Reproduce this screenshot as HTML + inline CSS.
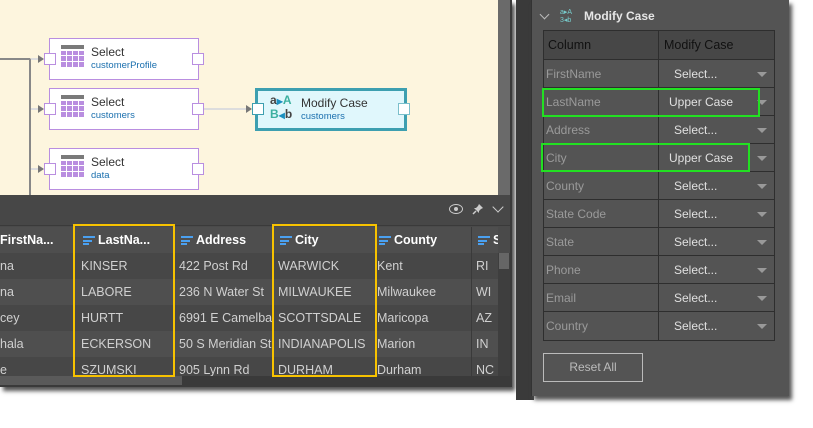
<!DOCTYPE html>
<html><head><style>
*{margin:0;padding:0;box-sizing:border-box}
body{width:813px;height:428px;background:#fff;position:relative;overflow:hidden;font-family:"Segoe UI","Liberation Sans",sans-serif}
.a{position:absolute}
.node{position:absolute;background:#fff;border:1px solid #b98ee0;width:150px;height:42px}
.port{position:absolute;width:12px;height:12px;background:#fff;border:1px solid #b98ee0;top:14px}
.grid{position:absolute;left:11px;top:6px;width:23px;height:23px;
background:linear-gradient(#7a7a7a 0 0) 0 0/23px 4px no-repeat,
repeating-linear-gradient(90deg,#b98ee0 0 5px,transparent 5px 6px) 0 6px/23px 17px no-repeat}
.grid::after{content:"";position:absolute;left:0;top:0;width:23px;height:23px;background:repeating-linear-gradient(180deg,transparent 0 5px,#fff 5px 6px) 0 5px/23px 18px no-repeat}
.nt{position:absolute;left:41px;top:7px;font-size:12px;color:#333;line-height:13px}
.ns{position:absolute;left:41px;top:21px;font-size:9.5px;color:#1a6fae}
.row{position:absolute;left:0;width:498px;height:26px;font-size:12.5px;color:#d0d0d0;line-height:26px;overflow:hidden}
.row span{position:absolute;white-space:nowrap}
.hd{font-weight:bold;color:#fff;font-size:12.5px}
.ic{display:inline-block;width:12px;height:9px;margin-right:3px;vertical-align:-1px;background:linear-gradient(#4aa0f0 0 0) 0 0/12px 2px no-repeat,linear-gradient(#4aa0f0 0 0) 0 3.5px/9px 2px no-repeat,linear-gradient(#4aa0f0 0 0) 0 7px/6px 2px no-repeat}
.tr{position:absolute;left:543px;width:232px;height:28px;border-bottom:1px solid #2e2e2e;font-size:12px;line-height:28px}
.tr .c1{position:absolute;left:3px;color:#9a9a9a}
.tr .c2{position:absolute;left:116px;color:#e0e0e0}
.tr .dd{position:absolute;right:8px;top:12px;border-left:5px solid transparent;border-right:5px solid transparent;border-top:5px solid #999}
</style></head><body>
<div class="a" style="left:0;top:0;width:512px;height:387px;background:#3a3a3a;box-shadow:3px 4px 4px #555"></div>
<div class="a" style="left:0;top:0;width:498px;height:195px;background:#fdf5de"></div>
<div class="a" style="left:498px;top:0;width:12px;height:195px;background:#6a6a6a"></div>
<div class="a" style="left:0;top:195px;width:510px;height:30px;background:#474747"></div>
<div class="a" style="left:0;top:58px;width:30px;height:2px;background:#888"></div>
<div class="a" style="left:29px;top:58px;width:2px;height:137px;background:#888;border-top-right-radius:3px"></div>
<div class="a" style="left:31px;top:58px;width:12px;height:2px;background:#ddd"></div>
<div class="a" style="left:31px;top:108px;width:12px;height:2px;background:#ddd"></div>
<div class="a" style="left:31px;top:168px;width:12px;height:2px;background:#ddd"></div>
<div class="a" style="left:38px;top:55px;border-left:6px solid #777;border-top:4px solid transparent;border-bottom:4px solid transparent"></div>
<div class="a" style="left:38px;top:105px;border-left:6px solid #777;border-top:4px solid transparent;border-bottom:4px solid transparent"></div>
<div class="a" style="left:38px;top:165px;border-left:6px solid #777;border-top:4px solid transparent;border-bottom:4px solid transparent"></div>
<div class="a" style="left:203px;top:108px;width:48px;height:2px;background:#ddd"></div>
<div class="a" style="left:246px;top:105px;border-left:6px solid #777;border-top:4px solid transparent;border-bottom:4px solid transparent"></div>

<div class="node" style="left:49px;top:38px"><div class="port" style="left:-6px"></div><div class="port" style="right:-6px"></div><div class="grid"></div><div class="nt">Select</div><div class="ns">customerProfile</div></div>
<div class="node" style="left:49px;top:88px"><div class="port" style="left:-6px"></div><div class="port" style="right:-6px"></div><div class="grid"></div><div class="nt">Select</div><div class="ns">customers</div></div>
<div class="node" style="left:49px;top:148px"><div class="port" style="left:-6px"></div><div class="port" style="right:-6px"></div><div class="grid"></div><div class="nt">Select</div><div class="ns">data</div></div>
<div class="a" style="left:255px;top:88px;width:152px;height:43px;background:#e0f7fc;border:3px solid #3d9fb0">
 <div class="port" style="left:-6px;top:12px;border-color:#3d9fb0"></div><div class="port" style="right:-6px;top:12px;border-color:#7bbfcb"></div>
 <div class="a" style="left:12px;top:3px;font-size:12px;font-weight:bold;color:#444;line-height:13px">a<span style="color:#1a90c0;font-size:8px">▶</span><span style="color:#3cb0a0">A</span><br><span style="color:#3cb0a0">B</span><span style="color:#1a90c0;font-size:8px">◀</span>b</div>
 <div class="a" style="left:43px;top:6px;font-size:12px;color:#333;line-height:13px">Modify Case</div>
 <div class="a" style="left:43px;top:20px;font-size:9.5px;color:#1a6fae">customers</div>
</div>
<div class="a" style="left:449px;top:204px;width:14px;height:10px;border:1.5px solid #ccc;border-radius:50%"></div>
<div class="a" style="left:454px;top:207px;width:4px;height:4px;background:#ccc;border-radius:50%"></div>
<svg class="a" style="left:472px;top:203px" width="12" height="12" viewBox="0 0 12 12"><path d="M7 1 L11 5 L9 6 L7 8 L7 10 L2 5 L4 5 L6 3 Z" fill="#ccc"/><path d="M4 8 L1 11" stroke="#ccc" stroke-width="1.5"/></svg>
<div class="a" style="left:494px;top:203px;width:8px;height:8px;border-right:1.5px solid #ccc;border-bottom:1.5px solid #ccc;transform:rotate(45deg)"></div>
<div class="a" style="left:0;top:226px;width:510px;height:150px;background:#4a4a4a"></div>
<div class="row hd" style="top:227px;height:26px;width:498px;background:#4e4e4e">
<span style="left:0">FirstNa...</span><span style="left:83px"><i class="ic"></i>LastNa...</span><span style="left:181px"><i class="ic"></i>Address</span><span style="left:280px"><i class="ic"></i>City</span><span style="left:379px"><i class="ic"></i>County</span><span style="left:478px"><i class="ic"></i>State</span></div>
<div class="row" style="top:253px;background:#474747"><span style="left:0">na</span><span style="left:81px">KINSER</span><span style="left:179px">422 Post Rd</span><span style="left:278px">WARWICK</span><span style="left:377px">Kent</span><span style="left:476px">RI</span></div>
<div class="row" style="top:279px;background:#4f4f4f"><span style="left:0">na</span><span style="left:81px">LABORE</span><span style="left:179px">236 N Water St</span><span style="left:278px">MILWAUKEE</span><span style="left:377px">Milwaukee</span><span style="left:476px">WI</span></div>
<div class="row" style="top:305px;background:#474747"><span style="left:0">cey</span><span style="left:81px">HURTT</span><span style="left:179px;width:95px;overflow:hidden">6991 E Camelback</span><span style="left:278px">SCOTTSDALE</span><span style="left:377px">Maricopa</span><span style="left:476px">AZ</span></div>
<div class="row" style="top:331px;background:#4f4f4f"><span style="left:0">hala</span><span style="left:81px">ECKERSON</span><span style="left:179px;width:95px;overflow:hidden">50 S Meridian St #</span><span style="left:278px">INDIANAPOLIS</span><span style="left:377px">Marion</span><span style="left:476px">IN</span></div>
<div class="row" style="top:357px;height:19px;background:#474747"><span style="left:0">e</span><span style="left:81px">SZUMSKI</span><span style="left:179px">905 Lynn Rd</span><span style="left:278px">DURHAM</span><span style="left:377px">Durham</span><span style="left:476px">NC</span></div>
<div class="a" style="left:174px;top:253px;width:1px;height:123px;background:#3e3e3e"></div>
<div class="a" style="left:471px;top:227px;width:1px;height:149px;background:#3a3a3a"></div>
<div class="a" style="left:498px;top:253px;width:12px;height:123px;background:#3e3e3e"></div>
<div class="a" style="left:499px;top:253px;width:10px;height:16px;background:#666"></div>
<div class="a" style="left:0;top:376px;width:182px;height:9px;background:#5a5a5a"></div>
<div class="a" style="left:73px;top:224px;width:102px;height:153px;border:2px solid #f7c200"></div>
<div class="a" style="left:272px;top:224px;width:105px;height:153px;border:2px solid #f7c200"></div>

<div class="a" style="left:516px;top:0;width:18px;height:400px;background:#3a3a3a"></div>
<div class="a" style="left:531px;top:0;width:258px;height:396px;background:#545454;border-left:1px solid #333;box-shadow:3px 4px 4px #555"></div>
<div class="a" style="left:541px;top:11px;width:7px;height:7px;border-right:1.5px solid #bbb;border-bottom:1.5px solid #bbb;transform:rotate(45deg)"></div>
<div class="a" style="left:560px;top:9px;font-size:7px;line-height:8px;color:#7cc">a▸A<br>3◂b</div>
<div class="a" style="left:584px;top:9px;font-size:12px;font-weight:bold;color:#e6e6e6">Modify Case</div>
<div class="a" style="left:543px;top:30px;width:232px;height:311px;border:1px solid #2e2e2e;background:#545454"></div>
<div class="a" style="left:543px;top:30px;width:232px;height:30px;background:#474747;border:1px solid #2e2e2e;font-size:12.5px;color:#111;line-height:28px"><span style="position:absolute;left:4px">Column</span><span style="position:absolute;left:120px">Modify Case</span></div>
<div class="a" style="left:658px;top:30px;width:1px;height:311px;background:#2e2e2e"></div>
<div class="tr" style="top:60px"><span class="c1">FirstName</span><span class="c2" style="left:131px">Select...</span><i class="dd"></i></div>
<div class="tr" style="top:88px"><span class="c1">LastName</span><span class="c2" style="left:126px">Upper Case</span><i class="dd"></i></div>
<div class="tr" style="top:116px"><span class="c1">Address</span><span class="c2" style="left:131px">Select...</span><i class="dd"></i></div>
<div class="tr" style="top:144px"><span class="c1">City</span><span class="c2" style="left:126px">Upper Case</span><i class="dd"></i></div>
<div class="tr" style="top:172px"><span class="c1">County</span><span class="c2" style="left:131px">Select...</span><i class="dd"></i></div>
<div class="tr" style="top:200px"><span class="c1">State Code</span><span class="c2" style="left:131px">Select...</span><i class="dd"></i></div>
<div class="tr" style="top:228px"><span class="c1">State</span><span class="c2" style="left:131px">Select...</span><i class="dd"></i></div>
<div class="tr" style="top:256px"><span class="c1">Phone</span><span class="c2" style="left:131px">Select...</span><i class="dd"></i></div>
<div class="tr" style="top:284px"><span class="c1">Email</span><span class="c2" style="left:131px">Select...</span><i class="dd"></i></div>
<div class="tr" style="top:312px;border-bottom:none"><span class="c1">Country</span><span class="c2" style="left:131px">Select...</span><i class="dd"></i></div>
<div class="a" style="left:542px;top:88px;width:218px;height:29px;border:2px solid #22e022"></div>
<div class="a" style="left:541px;top:143px;width:209px;height:29px;border:2px solid #22e022"></div>
<div class="a" style="left:543px;top:353px;width:100px;height:29px;border:1px solid #bbb;color:#bbb;font-size:12px;text-align:center;line-height:27px">Reset All</div>
</body></html>
